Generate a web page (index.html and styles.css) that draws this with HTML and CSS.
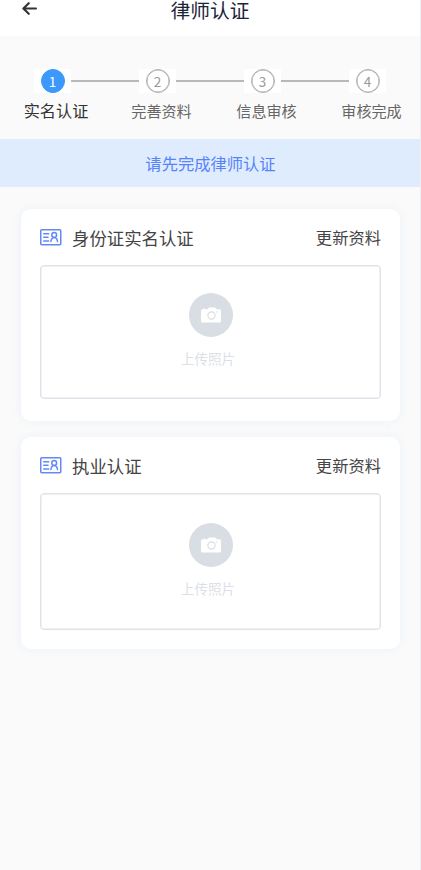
FILE: index.html
```html
<!DOCTYPE html>
<html lang="zh-CN">
<head>
    <meta charset="UTF-8">
    <meta name="viewport" content="width=device-width, initial-scale=1.0">
    <title>律师认证</title>
    <link rel="stylesheet" href="styles.css">
</head>
<body>
    <!-- 图标定义 -->
    <svg class="icon-defs" width="0" height="0">
        <symbol id="icon-card" viewBox="0 0 22 17">
            <g fill="none" stroke="currentColor" stroke-width="1.5" stroke-linecap="round">
                <rect x="0.75" y="0.75" width="20" height="15" rx="1"/>
                <path d="M3.7 4.700h5M3.7 8.300h4.300M3.7 11.900h5M10.900 12.500c.4-2.700 1.300-4 3.300-4s2.900 1.300 3.300 4"/>
                <circle cx="14.200" cy="6" r="2.400"/>
            </g>
        </symbol>
        <symbol id="icon-camera" viewBox="0 0 20 16">
            <path fill="#fff" d="M1.500 2.300H2V1.700h2.500v.600h1.900L7.300.900Q7.600.500 8.200.500h5.600q.600 0 .900.400l.900 1.400h2.900q1.500 0 1.500 1.500v10.200q0 1.500-1.500 1.500h-17Q0 15.500 0 14V3.800Q0 2.300 1.500 2.300z"/>
            <circle cx="10.500" cy="8.500" r="3.600" fill="none" stroke="#d9dde4" stroke-width="1.200"/>
            <circle cx="15.700" cy="5" r=".7" fill="#d9dde4"/>
        </symbol>
    </svg>

    <header class="header">
        <svg class="back" viewBox="0 0 14 12">
            <path d="M13 6H1.500M6.300 1L1.300 6l5 5" fill="none" stroke="currentColor" stroke-width="2" stroke-linecap="round" stroke-linejoin="round"/>
        </svg>
        <h1>律师认证</h1>
    </header>

    <div class="steps">
        <div class="step active">
            <div class="step-head"><span class="step-icon"><i>1</i></span></div>
            <div class="step-title">实名认证</div>
        </div>
        <div class="step">
            <div class="step-head"><span class="step-icon"><i>2</i></span></div>
            <div class="step-title">完善资料</div>
        </div>
        <div class="step">
            <div class="step-head"><span class="step-icon"><i>3</i></span></div>
            <div class="step-title">信息审核</div>
        </div>
        <div class="step">
            <div class="step-head"><span class="step-icon"><i>4</i></span></div>
            <div class="step-title">审核完成</div>
        </div>
    </div>

    <div class="notice">请先完成律师认证</div>

    <main class="cards">
        <section class="card">
            <div class="card-head">
                <svg class="card-icon"><use href="#icon-card"/></svg>
                <h2>身份证实名认证</h2>
                <a class="update">更新资料</a>
            </div>
            <div class="upload">
                <div class="upload-icon"><svg><use href="#icon-camera"/></svg></div>
                <p>上传照片</p>
            </div>
        </section>

        <section class="card card-license">
            <div class="card-head">
                <svg class="card-icon"><use href="#icon-card"/></svg>
                <h2>执业认证</h2>
                <a class="update">更新资料</a>
            </div>
            <div class="upload">
                <div class="upload-icon"><svg><use href="#icon-camera"/></svg></div>
                <p>上传照片</p>
            </div>
        </section>
    </main>
</body>
</html>
```

FILE: styles.css
```css
* {
    box-sizing: border-box;
    margin: 0;
    padding: 0;
}

body {
    min-height: 870px;
    font-family: "Noto Sans CJK SC", sans-serif;
    background: #fafafa;
    border-right: 1px solid #eeeff1;
    overflow: hidden;
}

.icon-defs {
    display: block;
}

/* 顶部导航 */
.header {
    display: grid;
    grid-template-columns: 60px 1fr 60px;
    align-items: start;
    height: 36px;
    background: #fff;
}

.back {
    width: 15px;
    height: 13px;
    margin: 2px 0 0 22px;
    color: #333;
}

.header h1 {
    font-size: 19.8px;
    font-weight: 400;
    line-height: 19px;
    text-align: center;
    color: #1c2438;
}

/* 步骤条 */
.steps {
    display: flex;
    height: 103px;
    padding-top: 33px;
}

.step {
    flex: 1;
    text-align: center;
}

.step-head {
    display: flex;
    align-items: center;
    height: 24px;
}

.step-head::before,
.step-head::after {
    content: "";
    flex: 1;
    height: 1.5px;
    background: #b8b8b8;
}

.step:first-child .step-head::before,
.step:last-child .step-head::after {
    background: none;
}

.step-icon {
    display: flex;
    justify-content: center;
    width: 37px;
    background: #fff;
}

.step-icon i {
    width: 24px;
    height: 24px;
    border: 1px solid #b0b0b0;
    border-radius: 50%;
    box-shadow: inset 0 0 0 0.5px #b0b0b0;
    font-size: 13.5px;
    font-style: normal;
    line-height: 22px;
    color: #999;
}

.step-title {
    margin-top: 6px;
    padding-left: 8px;
    font-size: 15.1px;
    line-height: 22px;
    color: #666;
}

.active .step-icon i {
    border-color: #3b99fc;
    background: #3b99fc;
    box-shadow: none;
    color: #fff;
}

.active .step-title {
    padding-left: 7px;
    font-size: 16.2px;
    color: #333;
}

.notice {
    height: 48px;
    padding-left: 1px;
    font-size: 16.3px;
    line-height: 49px;
    text-align: center;
    color: #5583fb;
    background: #dfecfe;
}

/* 认证卡片 */
.cards {
    display: flex;
    flex-direction: column;
    gap: 16px;
    padding: 22px 20px 0 21px;
}

.card {
    height: 212px;
    padding: 16px 19px 0;
    border-radius: 10px;
    background: #fff;
    box-shadow: 0 0 10px rgba(225, 236, 248, 0.6);
}

.card-head {
    display: flex;
    align-items: center;
    height: 26px;
    margin-bottom: 14px;
}

.card-icon {
    width: 22px;
    height: 17px;
    margin: -1px 10px 0 0;
    color: #6488f8;
}

.card-head h2 {
    flex: 1;
    font-size: 17.4px;
    font-weight: 400;
    line-height: 26px;
    color: #444;
}

.update {
    margin-top: -2px;
    font-size: 16.3px;
    line-height: 26px;
    color: #444;
}

.upload {
    display: flex;
    flex-direction: column;
    align-items: center;
    height: 134px;
    padding-top: 27px;
    border: 1px solid #dfe3e9;
    border-radius: 4px;
    box-shadow: inset 0 0 0 0.5px #dfe3e9;
}

.card-license .upload {
    height: 137px;
    padding-top: 29px;
}

.upload-icon {
    display: flex;
    align-items: center;
    justify-content: center;
    width: 44px;
    height: 44px;
    border-radius: 50%;
    background: #d9dde4;
}

.upload-icon svg {
    width: 20px;
    height: 16px;
}

.upload p {
    margin-top: 11px;
    padding-right: 5px;
    font-size: 13.6px;
    line-height: 20px;
    color: #dcdfe5;
}
```
